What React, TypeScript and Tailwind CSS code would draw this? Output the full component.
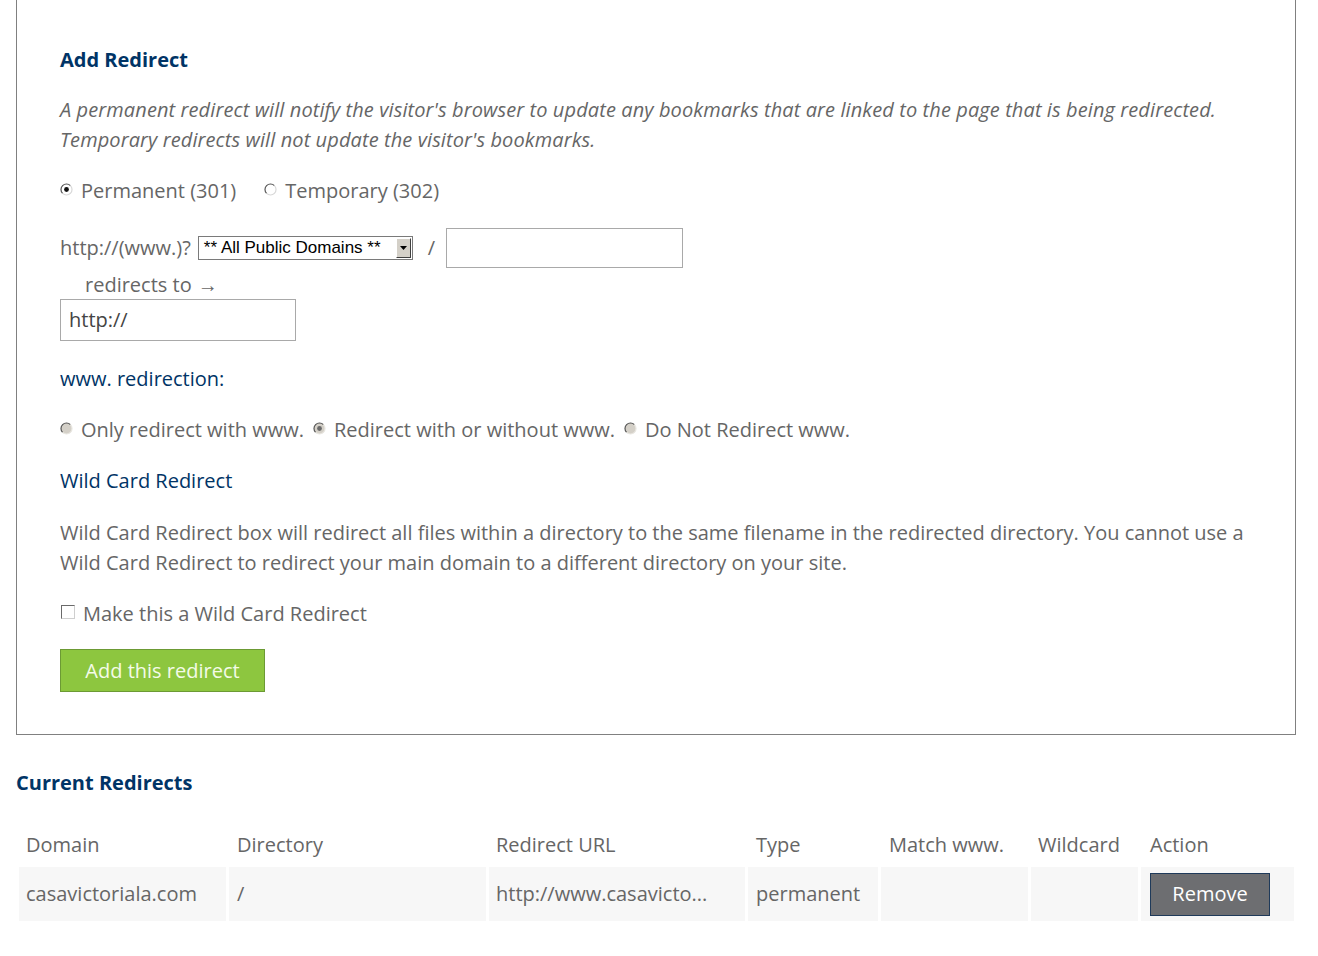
const font = { fontFamily: '"Open Sans", "Noto Sans", sans-serif' };

function Radio({ checked, dim }: { checked?: boolean; dim?: boolean }) {
  return (
    <svg width="13" height="13" viewBox="0 0 13 13" className="shrink-0">
      <circle cx="6.5" cy="6.5" r="5.5" fill={dim ? "#d4d0c8" : "#ffffff"} />
      <path d="M2.6 10.4 A5.5 5.5 0 0 1 10.4 2.6" fill="none" stroke="#555" strokeWidth="1.2" />
      <path d="M10.4 2.6 A5.5 5.5 0 0 1 2.6 10.4" fill="none" stroke={dim ? "#e8e6e0" : "#d8d8d8"} strokeWidth="1.2" />
      {checked && <circle cx="6.5" cy="6.5" r="2.4" fill={dim ? "#6a6a6a" : "#111"} />}
    </svg>
  );
}

function Option({ checked, dim, label }: { checked?: boolean; dim?: boolean; label: string }) {
  return (
    <label className="flex items-center">
      <span className="-mt-[4px]">
        <Radio checked={checked} dim={dim} />
      </span>
      <span className="ml-[8px]">{label}</span>
    </label>
  );
}

export default function App() {
  return (
    <div className="min-h-[956px] bg-white text-[20px] text-[#666]" style={font}>
      <div className="ml-[16px] w-[1280px] border-x border-b border-[#808080] pl-[43px] pt-[45px] pb-[42px]">
        <h2 className="text-[20px] font-bold leading-[30px] text-[#003466]">Add Redirect</h2>

        <p className="mt-[20px] italic leading-[30px] tracking-[0.1px]">
          A permanent redirect will notify the visitor's browser to update any bookmarks that are linked to the page that is being redirected.
          <br />
          Temporary redirects will not update the visitor's bookmarks.
        </p>

        <div className="mt-[21px] flex h-[30px] items-center gap-[28px]">
          <Option checked label="Permanent (301)" />
          <Option label="Temporary (302)" />
        </div>

        <div className="mt-[22px] flex h-[40px] items-center">
          <span>http://(www.)?</span>
          <div className="ml-[7px] flex h-[24px] w-[215px] items-center border border-[#7a7a7a] bg-white">
            <span
              className="flex-1 pl-[5px] text-[17px] leading-[20px] text-black"
              style={{ fontFamily: '"Liberation Sans", Arial, sans-serif' }}
            >
              ** All Public Domains **
            </span>
            <span className="mr-[1px] flex h-[20px] w-[15px] items-center justify-center border border-t-white border-l-white border-r-[#404040] border-b-[#404040] bg-[#d4d0c8]">
              <svg width="7" height="4" viewBox="0 0 7 4">
                <path d="M0 0 H7 L3.5 4 Z" fill="#000" />
              </svg>
            </span>
          </div>
          <span className="ml-[15px]">/</span>
          <div className="ml-[11px] h-[40px] w-[237px] border border-[#a9a9a9] bg-white" />
        </div>

        <div className="ml-[25px] mt-[3px] flex h-[28px] items-center gap-[6px]">
          <span>redirects to</span>
          <span style={{ fontFamily: '"Liberation Serif", serif' }} className="text-[20px] leading-[20px]">
            →
          </span>
        </div>

        <div className="flex h-[42px] w-[236px] items-center border border-[#a9a9a9] bg-white pl-[8px] text-[#444]">
          http://
        </div>

        <h3 className="mt-[23px] leading-[30px] text-[#003466]">www. redirection:</h3>

        <div className="mt-[21px] flex h-[30px] items-center gap-[9px]">
          <Option dim label="Only redirect with www." />
          <Option dim checked label="Redirect with or without www." />
          <Option dim label="Do Not Redirect www." />
        </div>

        <h3 className="mt-[21px] leading-[30px] text-[#003466]">Wild Card Redirect</h3>

        <p className="mt-[22px] leading-[30px]">
          Wild Card Redirect box will redirect all files within a directory to the same filename in the redirected directory. You cannot use a
          <br />
          Wild Card Redirect to redirect your main domain to a different directory on your site.
        </p>

        <label className="mt-[21px] flex h-[30px] items-center">
          <span className="-mt-[5px] ml-[1px] h-[14px] w-[14px] border border-[#6a6a6a] border-r-[#cfcfcf] border-b-[#cfcfcf] bg-white" />
          <span className="ml-[8px]">Make this a Wild Card Redirect</span>
        </label>

        <button className="mt-[20px] flex h-[43px] w-[205px] items-center justify-center border border-[#6c9a34] bg-[#8dc63f] text-[#f4fbe8]">
          Add this redirect
        </button>
      </div>

      <h2 className="ml-[16px] mt-[33px] text-[20px] font-bold leading-[30px] text-[#003466]">Current Redirects</h2>

      <table className="ml-[16px] mt-[25px] w-[1280px] table-fixed border-separate border-spacing-[3px]">
        <thead>
          <tr className="h-[38px] text-left">
            <th className="w-[207px] px-[7px] font-normal">Domain</th>
            <th className="w-[257px] px-[8px] font-normal">Directory</th>
            <th className="w-[256px] px-[7px] font-normal">Redirect URL</th>
            <th className="w-[130px] px-[8px] font-normal">Type</th>
            <th className="w-[147px] px-[8px] font-normal">Match www.</th>
            <th className="w-[107px] px-[7px] font-normal">Wildcard</th>
            <th className="w-[153px] px-[9px] font-normal">Action</th>
          </tr>
        </thead>
        <tbody>
          <tr className="h-[54px]">
            <td className="bg-[#f7f7f7] px-[7px]">casavictoriala.com</td>
            <td className="bg-[#f7f7f7] px-[8px]">/</td>
            <td className="overflow-hidden whitespace-nowrap bg-[#f7f7f7] px-[7px]">http://www.casavicto...</td>
            <td className="bg-[#f7f7f7] px-[8px]">permanent</td>
            <td className="bg-[#f7f7f7]" />
            <td className="bg-[#f7f7f7]" />
            <td className="bg-[#f7f7f7] px-[9px]">
              <button className="flex h-[43px] w-[120px] items-center justify-center border border-[#1f3a5a] bg-[#6d6e71] text-white">
                Remove
              </button>
            </td>
          </tr>
        </tbody>
      </table>
    </div>
  );
}
